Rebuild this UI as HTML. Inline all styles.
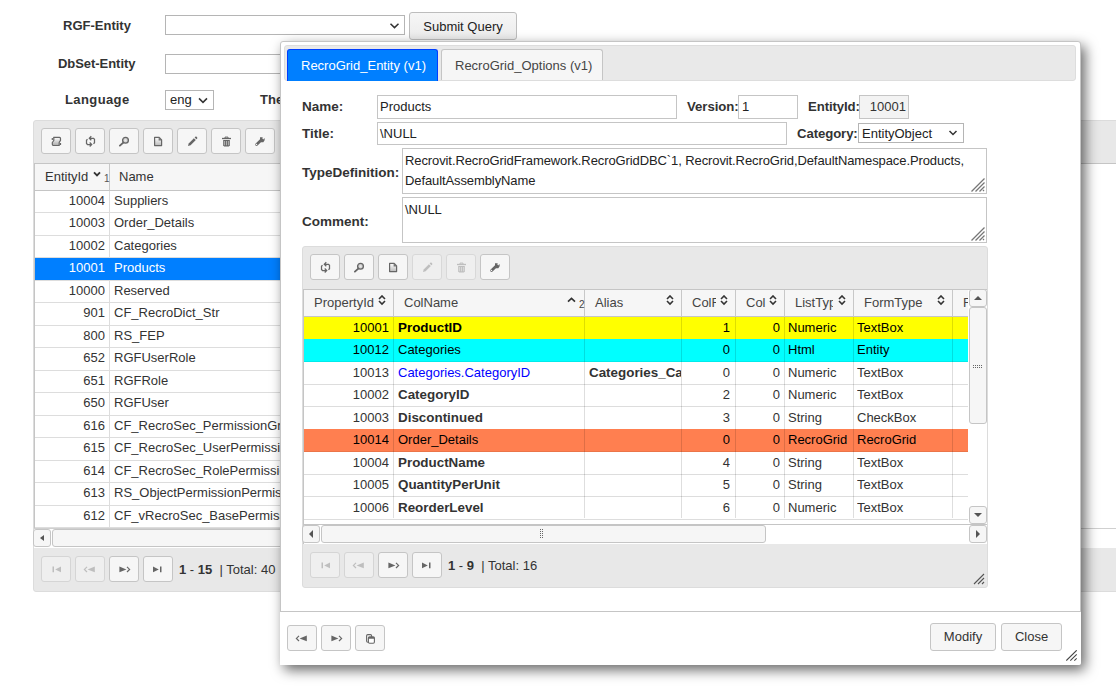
<!DOCTYPE html><html><head><meta charset="utf-8"><style>
*{box-sizing:border-box}
html,body{margin:0;padding:0;background:#fff;width:1116px;height:690px;overflow:hidden;position:relative;font-family:"Liberation Sans",sans-serif;color:#333;font-size:13px}
.a{position:absolute}
.lbl{position:absolute;font-weight:bold;color:#333;font-size:13px;white-space:nowrap;line-height:15px}
.sel{position:absolute;border:1px solid #b5b5b5;background:#fff}
.btn{position:absolute;background:#f6f6f6;border:1px solid #c5c5c5;border-radius:3px}
.btn .ic{position:absolute;left:50%;top:50%;margin-left:-8px;margin-top:-8px}
.btn .bl{position:absolute;left:0;right:0;top:0;bottom:inherit;height:100%;display:flex;align-items:center;justify-content:center;color:#333;font-size:13px}
.dis .ic{opacity:.35}
.txt{position:absolute;white-space:nowrap;line-height:15px}
.cell{position:absolute;white-space:nowrap;overflow:hidden;line-height:15px;color:#333}
.inp{position:absolute;border:1px solid #c5c5c5;background:#fff;font-size:13px;white-space:nowrap;overflow:hidden;color:#222}
.hl{position:absolute;height:1px;background:#ddd}
.vl{position:absolute;width:1px;background:#ddd}
</style></head><body>
<div class="lbl" style="left:63px;top:18px">RGF-Entity</div>
<div class="sel" style="left:165px;top:15px;width:240px;height:20px"></div>
<svg class="a" style="left:389px;top:22px" width="12" height="8"><path d="M1.5 1.8 5.5 5.6 9.5 1.8" stroke="#333" stroke-width="1.5" fill="none"/></svg>
<div class="btn" style="left:409px;top:12px;width:108px;height:28px;background:linear-gradient(#f6f6f6,#ececec);border-color:#bdbdbd"><div class="bl" style="color:#222;padding-top:1px">Submit Query</div></div>
<div class="lbl" style="left:58px;top:56px;letter-spacing:-.05px">DbSet-Entity</div>
<div class="sel" style="left:165px;top:54px;width:240px;height:20px"></div>
<div class="lbl" style="left:65px;top:92px;letter-spacing:.4px">Language</div>
<div class="sel" style="left:165px;top:90px;width:49px;height:20px"></div>
<div class="txt" style="left:170px;top:92px;color:#222">eng</div>
<svg class="a" style="left:198px;top:97px" width="10" height="8"><path d="M1 1.4 5 5.4 9 1.4" stroke="#333" stroke-width="1.5" fill="none"/></svg>
<div class="lbl" style="left:260px;top:92px">Theme</div>
<div class="a" style="left:33px;top:120px;width:1200px;height:472px;background:#e8e8e8;border:1px solid #dcdcdc;border-radius:3px"></div>
<div class="btn" style="left:41px;top:128px;width:30px;height:26px;"><svg class="ic" width="16" height="16" viewBox="0 0 16 16"><defs><linearGradient id="gs" x1="0" y1="0" x2="0" y2="1"><stop offset="0" stop-color="#fff"/><stop offset="1" stop-color="#aaa"/></linearGradient></defs><path d="M5.6 4.3H11.5Q12.5 4.5 12.5 5.5V7.4L11.2 9.3V12.5H5.3Q4.3 12.3 4.3 11.3V9.5L5.8 7.5V5.3Q5.8 4.3 5.6 4.3Z" fill="url(#gs)" stroke="#666" stroke-width="1.2" stroke-linejoin="round"/><path d="M4.3 5v2M12.5 10v2" stroke="#666" stroke-width="1.2"/></svg></div>
<div class="btn" style="left:75px;top:128px;width:30px;height:26px;"><svg class="ic" width="16" height="16" viewBox="0 0 16 16"><path d="M9.3 3.3 7.3 5.3 9.3 7.3M7.3 5.3H11.5L12.5 6.3V9.7L11.5 10.7M5.5 6.3 4.5 7.3V10.5L5.5 11.5H9.7M7.7 9.5 9.7 11.5 7.7 13.5" stroke="#666" stroke-width="1.25" fill="none"/></svg></div>
<div class="btn" style="left:109px;top:128px;width:30px;height:26px;"><svg class="ic" width="16" height="16" viewBox="0 0 16 16"><defs><radialGradient id="gq"><stop offset="0" stop-color="#eee"/><stop offset="1" stop-color="#bbb"/></radialGradient></defs><circle cx="9.5" cy="7.3" r="2.9" fill="url(#gq)" stroke="#666" stroke-width="1.3"/><path d="M7.3 9.6 3.9 12.6" stroke="#666" stroke-width="1.9" stroke-linecap="round"/></svg></div>
<div class="btn" style="left:143px;top:128px;width:30px;height:26px;"><svg class="ic" width="16" height="16" viewBox="0 0 16 16"><defs><linearGradient id="gd" x1="0" y1="0" x2="0" y2="1"><stop offset="0" stop-color="#fff"/><stop offset="1" stop-color="#bbb"/></linearGradient></defs><path d="M4.6 4.3H9.2L11.6 6.8V12.6H4.6Z" fill="url(#gd)" stroke="#666" stroke-width="1.2" stroke-linejoin="round"/><path d="M8.6 4.3V7.4H11.6V6.4L9.5 4.3Z" fill="#777"/></svg></div>
<div class="btn" style="left:177px;top:128px;width:30px;height:26px;"><svg class="ic" width="16" height="16" viewBox="0 0 16 16"><path d="M4 13 4.7 10.4 9.9 5.2 11.8 7.1 6.6 12.3Z" fill="#666"/><path d="M10.6 4.5 11.6 3.6Q12.1 3.3 12.6 3.8L13.2 4.4Q13.6 4.9 13.2 5.4L12.4 6.3Z" fill="#666"/></svg></div>
<div class="btn" style="left:211px;top:128px;width:30px;height:26px;"><svg class="ic" width="16" height="16" viewBox="0 0 16 16"><path d="M4 5.5H13" stroke="#666" stroke-width="1.3"/><path d="M7 5V4.1H10V5" stroke="#666" stroke-width="1" fill="none"/><path d="M5.2 7H11.8V12.5L10.8 13.6H6.2L5.2 12.5Z" fill="#666"/><path d="M6.6 8V12.3M8.5 8V12.3M10.4 8V12.3" stroke="#bbb" stroke-width=".9"/></svg></div>
<div class="btn" style="left:245px;top:128px;width:30px;height:26px;"><svg class="ic" width="16" height="16" viewBox="0 0 16 16"><path d="M4.6 11.5 9.5 6.8" stroke="#666" stroke-width="2.8" stroke-linecap="round"/><path d="M8 4.2H10.8L10.2 5.6L11.2 6.4L12.5 5Q12.9 6 12.5 7.5L11.3 9.2H9L8 7.8Z" fill="#666"/><circle cx="4.5" cy="11.6" r=".75" fill="#f6f6f6"/></svg></div>
<div class="a" style="left:34px;top:163px;width:1200px;height:365px;background:#fff;border-top:1px solid #c5c5c5"></div>
<div class="a" style="left:34px;top:164px;width:1000px;height:27px;background:#f6f6f6;border-bottom:1px solid #c5c5c5;border-left:1px solid #c5c5c5"></div>
<div class="vl" style="left:109px;top:164px;height:364px;background:#ddd"></div>
<div class="vl" style="left:109px;top:164px;height:27px;background:#c8c8c8"></div>
<div class="txt" style="left:45px;top:169px;color:#333">EntityId</div>
<svg class="a" style="left:93px;top:171px" width="8" height="6"><path d="M1 1.3 4 4.3 7 1.3" stroke="#333" stroke-width="1.9" fill="none"/></svg>
<div class="txt" style="left:104px;top:174px;font-size:10px;line-height:10px;color:#555">1</div>
<div class="txt" style="left:119px;top:169px">Name</div>
<div class="hl" style="left:35px;top:212.4px;width:1000px"></div>
<div class="cell" style="left:35px;top:192.9px;width:70px;text-align:right;color:#333">10004</div>
<div class="cell" style="left:114px;top:192.9px;width:180px;color:#333">Suppliers</div>
<div class="hl" style="left:35px;top:234.9px;width:1000px"></div>
<div class="cell" style="left:35px;top:215.4px;width:70px;text-align:right;color:#333">10003</div>
<div class="cell" style="left:114px;top:215.4px;width:180px;color:#333">Order_Details</div>
<div class="hl" style="left:35px;top:257.4px;width:1000px"></div>
<div class="cell" style="left:35px;top:237.9px;width:70px;text-align:right;color:#333">10002</div>
<div class="cell" style="left:114px;top:237.9px;width:180px;color:#333">Categories</div>
<div class="a" style="left:34px;top:257.9px;width:1000px;height:22.5px;background:#007fff"></div>
<div class="hl" style="left:35px;top:279.9px;width:1000px"></div>
<div class="cell" style="left:35px;top:260.4px;width:70px;text-align:right;color:#fff">10001</div>
<div class="cell" style="left:114px;top:260.4px;width:180px;color:#fff">Products</div>
<div class="hl" style="left:35px;top:302.4px;width:1000px"></div>
<div class="cell" style="left:35px;top:282.9px;width:70px;text-align:right;color:#333">10000</div>
<div class="cell" style="left:114px;top:282.9px;width:180px;color:#333">Reserved</div>
<div class="hl" style="left:35px;top:324.9px;width:1000px"></div>
<div class="cell" style="left:35px;top:305.4px;width:70px;text-align:right;color:#333">901</div>
<div class="cell" style="left:114px;top:305.4px;width:180px;color:#333">CF_RecroDict_Str</div>
<div class="hl" style="left:35px;top:347.4px;width:1000px"></div>
<div class="cell" style="left:35px;top:327.9px;width:70px;text-align:right;color:#333">800</div>
<div class="cell" style="left:114px;top:327.9px;width:180px;color:#333">RS_FEP</div>
<div class="hl" style="left:35px;top:369.9px;width:1000px"></div>
<div class="cell" style="left:35px;top:350.4px;width:70px;text-align:right;color:#333">652</div>
<div class="cell" style="left:114px;top:350.4px;width:180px;color:#333">RGFUserRole</div>
<div class="hl" style="left:35px;top:392.4px;width:1000px"></div>
<div class="cell" style="left:35px;top:372.9px;width:70px;text-align:right;color:#333">651</div>
<div class="cell" style="left:114px;top:372.9px;width:180px;color:#333">RGFRole</div>
<div class="hl" style="left:35px;top:414.9px;width:1000px"></div>
<div class="cell" style="left:35px;top:395.4px;width:70px;text-align:right;color:#333">650</div>
<div class="cell" style="left:114px;top:395.4px;width:180px;color:#333">RGFUser</div>
<div class="hl" style="left:35px;top:437.4px;width:1000px"></div>
<div class="cell" style="left:35px;top:417.9px;width:70px;text-align:right;color:#333">616</div>
<div class="cell" style="left:114px;top:417.9px;width:180px;color:#333">CF_RecroSec_PermissionGroup</div>
<div class="hl" style="left:35px;top:459.9px;width:1000px"></div>
<div class="cell" style="left:35px;top:440.4px;width:70px;text-align:right;color:#333">615</div>
<div class="cell" style="left:114px;top:440.4px;width:180px;color:#333">CF_RecroSec_UserPermission</div>
<div class="hl" style="left:35px;top:482.4px;width:1000px"></div>
<div class="cell" style="left:35px;top:462.9px;width:70px;text-align:right;color:#333">614</div>
<div class="cell" style="left:114px;top:462.9px;width:180px;color:#333">CF_RecroSec_RolePermission</div>
<div class="hl" style="left:35px;top:504.9px;width:1000px"></div>
<div class="cell" style="left:35px;top:485.4px;width:70px;text-align:right;color:#333">613</div>
<div class="cell" style="left:114px;top:485.4px;width:180px;color:#333">RS_ObjectPermissionPermission</div>
<div class="hl" style="left:35px;top:527.4px;width:1000px"></div>
<div class="cell" style="left:35px;top:507.9px;width:70px;text-align:right;color:#333">612</div>
<div class="cell" style="left:114px;top:507.9px;width:180px;color:#333">CF_vRecroSec_BasePermission</div>
<div class="vl" style="left:34px;top:164px;height:364px;background:#c5c5c5"></div>
<div class="a" style="left:34px;top:528px;width:1200px;height:20px;background:#fff;border-top:1px solid #d0d0d0"></div>
<div class="btn" style="left:33px;top:529px;width:18px;height:18px;border-radius:3px"></div>
<svg class="a" style="left:38px;top:534px" width="8" height="8"><path d="M6 1 2 4 6 7z" fill="#555"/></svg>
<div class="btn" style="left:52px;top:529px;width:900px;height:18px;border-radius:3px"></div>
<div class="btn dis" style="left:41px;top:556px;width:30px;height:26px;background:#efefef;border-color:#d5d5d5"><svg class="ic" width="16" height="16" viewBox="0 0 16 16"><path d="M4.5 5.6h1.5v5.6h-1.5zM7.2 8.4 13 5.6V11.2Z" fill="#666"/></svg></div>
<div class="btn dis" style="left:75px;top:556px;width:30px;height:26px;background:#efefef;border-color:#d5d5d5"><svg class="ic" width="16" height="16" viewBox="0 0 16 16"><path d="M5 5.8 2.4 8.4 5 11" stroke="#666" stroke-width="1.2" fill="none"/><path d="M5.6 8.4 12.8 5.6V11.2Z" fill="#666"/></svg></div>
<div class="btn" style="left:109px;top:556px;width:30px;height:26px;"><svg class="ic" width="16" height="16" viewBox="0 0 16 16"><path d="M3.4 5.6 10.4 8.4 3.4 11.2Z" fill="#666"/><path d="M11 5.8 13.6 8.4 11 11" stroke="#666" stroke-width="1.2" fill="none"/></svg></div>
<div class="btn" style="left:143px;top:556px;width:30px;height:26px;"><svg class="ic" width="16" height="16" viewBox="0 0 16 16"><path d="M10 5.6h1.5v5.6h-1.5zM3 5.6 8.8 8.4 3 11.2Z" fill="#666"/></svg></div>
<div class="txt" style="left:179px;top:562px"><b>1</b> - <b>15</b>&nbsp; | Total: 40</div>
<div class="a" style="left:280px;top:41px;width:801px;height:624px;background:#fff;border:1px solid #c5c5c5;border-radius:3px;box-shadow:4px 5px 13px rgba(0,0,0,.6)"></div>
<div class="a" style="left:284px;top:45px;width:792px;height:36px;background:#e9e9e9;border:1px solid #dddddd;border-radius:3px"></div>
<div class="a" style="left:287px;top:49px;width:151px;height:32px;background:#007fff;border:1px solid #003eff;border-bottom:none;border-radius:3px 3px 0 0"></div>
<div class="txt" style="left:301px;top:58px;color:#fff">RecroGrid_Entity (v1)</div>
<div class="a" style="left:441px;top:49px;width:162px;height:31px;background:#f6f6f6;border:1px solid #c5c5c5;border-bottom:none;border-radius:3px 3px 0 0"></div>
<div class="txt" style="left:455px;top:58px;color:#454545">RecroGrid_Options (v1)</div>
<div class="lbl" style="left:302px;top:99px;font-size:13.5px">Name:</div>
<div class="inp" style="left:377px;top:95px;width:300px;height:24px;padding:3px 0 0 2px">Products</div>
<div class="lbl" style="left:687px;top:99px;font-size:13.2px;letter-spacing:-.05px">Version:</div>
<div class="inp" style="left:738px;top:95px;width:60px;height:24px;padding:3px 0 0 3px">1</div>
<div class="lbl" style="left:808px;top:99px;font-size:13.2px;letter-spacing:-.1px">EntityId:</div>
<div class="inp" style="left:859px;top:95px;width:50px;height:24px;padding:3px 2px 0 0;background:#f3f3f3;text-align:right;color:#333">10001</div>
<div class="lbl" style="left:302px;top:126px;font-size:13.5px">Title:</div>
<div class="inp" style="left:377px;top:122px;width:410px;height:23px;padding:3px 0 0 2px">\NULL</div>
<div class="lbl" style="left:797px;top:126px;font-size:13.2px;letter-spacing:-.1px">Category:</div>
<div class="inp" style="left:858px;top:123px;width:106px;height:20px;padding:2px 0 0 3px;border-color:#b5b5b5">EntityObject</div>
<svg class="a" style="left:948px;top:129px" width="10" height="8"><path d="M1.5 2 5 5.5 8.5 2" stroke="#333" stroke-width="1.5" fill="none"/></svg>
<div class="lbl" style="left:302px;top:165px;font-size:13.5px">TypeDefinition:</div>
<div class="inp" style="left:402px;top:148px;width:585px;height:46px;padding:2px 0 0 2px;line-height:19.5px;white-space:normal;letter-spacing:-0.1px">Recrovit.RecroGridFramework.RecroGridDBC`1, Recrovit.RecroGrid,DefaultNamespace.Products,<br>DefaultAssemblyName</div>
<svg class="a" style="left:971px;top:178px" width="14" height="14"><path d="M.5 13.5 13.5 .5M4.5 13.5 13.5 4.5M8.5 13.5 13.5 8.5M12 13 13 12" stroke="#777" stroke-width="1.3"/></svg>
<div class="lbl" style="left:302px;top:214px;font-size:13.5px">Comment:</div>
<div class="inp" style="left:402px;top:197px;width:585px;height:46px;padding:2px 0 0 2px;line-height:19.5px">\NULL</div>
<svg class="a" style="left:971px;top:227px" width="14" height="14"><path d="M.5 13.5 13.5 .5M4.5 13.5 13.5 4.5M8.5 13.5 13.5 8.5M12 13 13 12" stroke="#777" stroke-width="1.3"/></svg>
<div class="a" style="left:302px;top:246px;width:686px;height:342px;background:#e8e8e8;border:1px solid #dcdcdc;border-radius:3px"></div>
<div class="btn" style="left:310px;top:254px;width:30px;height:26px;"><svg class="ic" width="16" height="16" viewBox="0 0 16 16"><path d="M9.3 3.3 7.3 5.3 9.3 7.3M7.3 5.3H11.5L12.5 6.3V9.7L11.5 10.7M5.5 6.3 4.5 7.3V10.5L5.5 11.5H9.7M7.7 9.5 9.7 11.5 7.7 13.5" stroke="#666" stroke-width="1.25" fill="none"/></svg></div>
<div class="btn" style="left:344px;top:254px;width:30px;height:26px;"><svg class="ic" width="16" height="16" viewBox="0 0 16 16"><defs><radialGradient id="gq"><stop offset="0" stop-color="#eee"/><stop offset="1" stop-color="#bbb"/></radialGradient></defs><circle cx="9.5" cy="7.3" r="2.9" fill="url(#gq)" stroke="#666" stroke-width="1.3"/><path d="M7.3 9.6 3.9 12.6" stroke="#666" stroke-width="1.9" stroke-linecap="round"/></svg></div>
<div class="btn" style="left:378px;top:254px;width:30px;height:26px;"><svg class="ic" width="16" height="16" viewBox="0 0 16 16"><defs><linearGradient id="gd" x1="0" y1="0" x2="0" y2="1"><stop offset="0" stop-color="#fff"/><stop offset="1" stop-color="#bbb"/></linearGradient></defs><path d="M4.6 4.3H9.2L11.6 6.8V12.6H4.6Z" fill="url(#gd)" stroke="#666" stroke-width="1.2" stroke-linejoin="round"/><path d="M8.6 4.3V7.4H11.6V6.4L9.5 4.3Z" fill="#777"/></svg></div>
<div class="btn dis" style="left:412px;top:254px;width:30px;height:26px;background:#efefef;border-color:#d8d8d8"><svg class="ic" width="16" height="16" viewBox="0 0 16 16"><path d="M4 13 4.7 10.4 9.9 5.2 11.8 7.1 6.6 12.3Z" fill="#666"/><path d="M10.6 4.5 11.6 3.6Q12.1 3.3 12.6 3.8L13.2 4.4Q13.6 4.9 13.2 5.4L12.4 6.3Z" fill="#666"/></svg></div>
<div class="btn dis" style="left:446px;top:254px;width:30px;height:26px;background:#efefef;border-color:#d8d8d8"><svg class="ic" width="16" height="16" viewBox="0 0 16 16"><path d="M4 5.5H13" stroke="#666" stroke-width="1.3"/><path d="M7 5V4.1H10V5" stroke="#666" stroke-width="1" fill="none"/><path d="M5.2 7H11.8V12.5L10.8 13.6H6.2L5.2 12.5Z" fill="#666"/><path d="M6.6 8V12.3M8.5 8V12.3M10.4 8V12.3" stroke="#bbb" stroke-width=".9"/></svg></div>
<div class="btn" style="left:480px;top:254px;width:30px;height:26px;"><svg class="ic" width="16" height="16" viewBox="0 0 16 16"><path d="M4.6 11.5 9.5 6.8" stroke="#666" stroke-width="2.8" stroke-linecap="round"/><path d="M8 4.2H10.8L10.2 5.6L11.2 6.4L12.5 5Q12.9 6 12.5 7.5L11.3 9.2H9L8 7.8Z" fill="#666"/><circle cx="4.5" cy="11.6" r=".75" fill="#f6f6f6"/></svg></div>
<div class="a" style="left:303px;top:289px;width:684px;height:235px;background:#fff;border-top:1px solid #c5c5c5;border-left:1px solid #c5c5c5"></div>
<div class="a" style="left:304px;top:290px;width:664px;height:27px;background:#f6f6f6;border-bottom:1px solid #c5c5c5"></div>
<div class="vl" style="left:393px;top:290px;height:27px;background:#c8c8c8"></div>
<div class="vl" style="left:584px;top:290px;height:27px;background:#c8c8c8"></div>
<div class="vl" style="left:681px;top:290px;height:27px;background:#c8c8c8"></div>
<div class="vl" style="left:735px;top:290px;height:27px;background:#c8c8c8"></div>
<div class="vl" style="left:784px;top:290px;height:27px;background:#c8c8c8"></div>
<div class="vl" style="left:853px;top:290px;height:27px;background:#c8c8c8"></div>
<div class="vl" style="left:952px;top:290px;height:27px;background:#c8c8c8"></div>
<div class="txt" style="left:314px;top:295px;color:#444">PropertyId</div>
<svg class="a" style="left:378px;top:295px" width="8" height="11"><path d="M1 4 4 1 7 4M1 6 4 9 7 6" stroke="#333" stroke-width="1.6" fill="none"/></svg>
<div class="txt" style="left:404px;top:295px;color:#444">ColName</div>
<div class="txt" style="left:595px;top:295px;color:#444">Alias</div>
<svg class="a" style="left:666px;top:295px" width="8" height="11"><path d="M1 4 4 1 7 4M1 6 4 9 7 6" stroke="#333" stroke-width="1.6" fill="none"/></svg>
<div class="txt" style="left:692px;top:295px;color:#444;width:24px;overflow:hidden">ColF</div>
<svg class="a" style="left:720px;top:295px" width="8" height="11"><path d="M1 4 4 1 7 4M1 6 4 9 7 6" stroke="#333" stroke-width="1.6" fill="none"/></svg>
<div class="txt" style="left:746px;top:295px;color:#444">Col</div>
<svg class="a" style="left:769px;top:295px" width="8" height="11"><path d="M1 4 4 1 7 4M1 6 4 9 7 6" stroke="#333" stroke-width="1.6" fill="none"/></svg>
<div class="txt" style="left:795px;top:295px;color:#444;width:38px;overflow:hidden">ListTyp</div>
<svg class="a" style="left:838px;top:295px" width="8" height="11"><path d="M1 4 4 1 7 4M1 6 4 9 7 6" stroke="#333" stroke-width="1.6" fill="none"/></svg>
<div class="txt" style="left:864px;top:295px;color:#444">FormType</div>
<svg class="a" style="left:937px;top:295px" width="8" height="11"><path d="M1 4 4 1 7 4M1 6 4 9 7 6" stroke="#333" stroke-width="1.6" fill="none"/></svg>
<div class="txt" style="left:963px;top:295px;color:#444;width:5px;overflow:hidden">F</div>
<svg class="a" style="left:567px;top:297px" width="9" height="6"><path d="M1 4.6 4.5 1.4 8 4.6" stroke="#333" stroke-width="1.7" fill="none"/></svg>
<div class="txt" style="left:579px;top:300px;font-size:10px;line-height:10px;color:#444">2</div>
<div class="a" style="left:304px;top:316.5px;width:664px;height:22.5px;background:#ffff00"></div>
<div class="hl" style="left:304px;top:338.5px;width:664px;background:rgba(0,0,0,.08)"></div>
<div class="cell" style="left:304px;top:319.5px;width:85px;text-align:right;color:#000">10001</div>
<div class="cell" style="left:398px;top:319.5px;width:185px;font-weight:bold;font-size:13.4px;color:#000">ProductID</div>
<div class="cell" style="left:681px;top:319.5px;width:49px;text-align:right;color:#000">1</div>
<div class="cell" style="left:736px;top:319.5px;width:44px;text-align:right;color:#000">0</div>
<div class="cell" style="left:788px;top:319.5px;width:65px;color:#000">Numeric</div>
<div class="cell" style="left:857px;top:319.5px;width:95px;color:#000">TextBox</div>
<div class="a" style="left:304px;top:339.0px;width:664px;height:22.5px;background:#00ffff"></div>
<div class="hl" style="left:304px;top:361.0px;width:664px;background:rgba(0,0,0,.08)"></div>
<div class="cell" style="left:304px;top:342.0px;width:85px;text-align:right;color:#000">10012</div>
<div class="cell" style="left:398px;top:342.0px;width:185px;color:#000">Categories</div>
<div class="cell" style="left:681px;top:342.0px;width:49px;text-align:right;color:#000">0</div>
<div class="cell" style="left:736px;top:342.0px;width:44px;text-align:right;color:#000">0</div>
<div class="cell" style="left:788px;top:342.0px;width:65px;color:#000">Html</div>
<div class="cell" style="left:857px;top:342.0px;width:95px;color:#000">Entity</div>
<div class="hl" style="left:304px;top:383.5px;width:664px;background:#ddd"></div>
<div class="cell" style="left:304px;top:364.5px;width:85px;text-align:right;color:#333">10013</div>
<div class="cell" style="left:398px;top:364.5px;width:185px;color:#0000ff">Categories.CategoryID</div>
<div class="cell" style="left:589px;top:364.5px;width:92px;font-weight:bold;font-size:13.4px;color:#333">Categories_Ca</div>
<div class="cell" style="left:681px;top:364.5px;width:49px;text-align:right;color:#333">0</div>
<div class="cell" style="left:736px;top:364.5px;width:44px;text-align:right;color:#333">0</div>
<div class="cell" style="left:788px;top:364.5px;width:65px;color:#333">Numeric</div>
<div class="cell" style="left:857px;top:364.5px;width:95px;color:#333">TextBox</div>
<div class="hl" style="left:304px;top:406.0px;width:664px;background:#ddd"></div>
<div class="cell" style="left:304px;top:387.0px;width:85px;text-align:right;color:#333">10002</div>
<div class="cell" style="left:398px;top:387.0px;width:185px;font-weight:bold;font-size:13.4px;color:#333">CategoryID</div>
<div class="cell" style="left:681px;top:387.0px;width:49px;text-align:right;color:#333">2</div>
<div class="cell" style="left:736px;top:387.0px;width:44px;text-align:right;color:#333">0</div>
<div class="cell" style="left:788px;top:387.0px;width:65px;color:#333">Numeric</div>
<div class="cell" style="left:857px;top:387.0px;width:95px;color:#333">TextBox</div>
<div class="hl" style="left:304px;top:428.5px;width:664px;background:#ddd"></div>
<div class="cell" style="left:304px;top:409.5px;width:85px;text-align:right;color:#333">10003</div>
<div class="cell" style="left:398px;top:409.5px;width:185px;font-weight:bold;font-size:13.4px;color:#333">Discontinued</div>
<div class="cell" style="left:681px;top:409.5px;width:49px;text-align:right;color:#333">3</div>
<div class="cell" style="left:736px;top:409.5px;width:44px;text-align:right;color:#333">0</div>
<div class="cell" style="left:788px;top:409.5px;width:65px;color:#333">String</div>
<div class="cell" style="left:857px;top:409.5px;width:95px;color:#333">CheckBox</div>
<div class="a" style="left:304px;top:429.0px;width:664px;height:22.5px;background:#ff7f50"></div>
<div class="hl" style="left:304px;top:451.0px;width:664px;background:rgba(0,0,0,.08)"></div>
<div class="cell" style="left:304px;top:432.0px;width:85px;text-align:right;color:#000">10014</div>
<div class="cell" style="left:398px;top:432.0px;width:185px;color:#000">Order_Details</div>
<div class="cell" style="left:681px;top:432.0px;width:49px;text-align:right;color:#000">0</div>
<div class="cell" style="left:736px;top:432.0px;width:44px;text-align:right;color:#000">0</div>
<div class="cell" style="left:788px;top:432.0px;width:65px;color:#000">RecroGrid</div>
<div class="cell" style="left:857px;top:432.0px;width:95px;color:#000">RecroGrid</div>
<div class="hl" style="left:304px;top:473.5px;width:664px;background:#ddd"></div>
<div class="cell" style="left:304px;top:454.5px;width:85px;text-align:right;color:#333">10004</div>
<div class="cell" style="left:398px;top:454.5px;width:185px;font-weight:bold;font-size:13.4px;color:#333">ProductName</div>
<div class="cell" style="left:681px;top:454.5px;width:49px;text-align:right;color:#333">4</div>
<div class="cell" style="left:736px;top:454.5px;width:44px;text-align:right;color:#333">0</div>
<div class="cell" style="left:788px;top:454.5px;width:65px;color:#333">String</div>
<div class="cell" style="left:857px;top:454.5px;width:95px;color:#333">TextBox</div>
<div class="hl" style="left:304px;top:496.0px;width:664px;background:#ddd"></div>
<div class="cell" style="left:304px;top:477.0px;width:85px;text-align:right;color:#333">10005</div>
<div class="cell" style="left:398px;top:477.0px;width:185px;font-weight:bold;font-size:13.4px;color:#333">QuantityPerUnit</div>
<div class="cell" style="left:681px;top:477.0px;width:49px;text-align:right;color:#333">5</div>
<div class="cell" style="left:736px;top:477.0px;width:44px;text-align:right;color:#333">0</div>
<div class="cell" style="left:788px;top:477.0px;width:65px;color:#333">String</div>
<div class="cell" style="left:857px;top:477.0px;width:95px;color:#333">TextBox</div>
<div class="hl" style="left:304px;top:518.5px;width:664px;background:#ddd"></div>
<div class="cell" style="left:304px;top:499.5px;width:85px;text-align:right;color:#333">10006</div>
<div class="cell" style="left:398px;top:499.5px;width:185px;font-weight:bold;font-size:13.4px;color:#333">ReorderLevel</div>
<div class="cell" style="left:681px;top:499.5px;width:49px;text-align:right;color:#333">6</div>
<div class="cell" style="left:736px;top:499.5px;width:44px;text-align:right;color:#333">0</div>
<div class="cell" style="left:788px;top:499.5px;width:65px;color:#333">Numeric</div>
<div class="cell" style="left:857px;top:499.5px;width:95px;color:#333">TextBox</div>
<div class="vl" style="left:393px;top:317px;height:201px;background:rgba(0,0,0,.13)"></div>
<div class="vl" style="left:584px;top:317px;height:201px;background:rgba(0,0,0,.13)"></div>
<div class="vl" style="left:681px;top:317px;height:201px;background:rgba(0,0,0,.13)"></div>
<div class="vl" style="left:735px;top:317px;height:201px;background:rgba(0,0,0,.13)"></div>
<div class="vl" style="left:784px;top:317px;height:201px;background:rgba(0,0,0,.13)"></div>
<div class="vl" style="left:853px;top:317px;height:201px;background:rgba(0,0,0,.13)"></div>
<div class="vl" style="left:952px;top:317px;height:201px;background:rgba(0,0,0,.13)"></div>
<div class="btn" style="left:969px;top:289px;width:18px;height:18px"></div>
<svg class="a" style="left:974px;top:294px" width="8" height="8"><path d="M0 6 4 2 8 6z" fill="#555"/></svg>
<div class="btn" style="left:969px;top:307px;width:18px;height:117px"></div>
<svg class="a" style="left:973px;top:365px" width="10" height="3"><path d="M0 .5h10M0 2.5h10" stroke="#666" stroke-width="1" stroke-dasharray="1 1"/></svg>
<div class="btn" style="left:969px;top:506px;width:18px;height:18px"></div>
<svg class="a" style="left:974px;top:511px" width="8" height="8"><path d="M0 2 4 6 8 2z" fill="#555"/></svg>
<div class="a" style="left:303px;top:524px;width:684px;height:20px;background:#fff;border-top:1px solid #c5c5c5;border-left:1px solid #c5c5c5"></div>
<div class="btn" style="left:302px;top:525px;width:18px;height:18px"></div>
<svg class="a" style="left:307px;top:530px" width="8" height="8"><path d="M6 0 2 4 6 8z" fill="#555"/></svg>
<div class="btn" style="left:321px;top:525px;width:445px;height:18px"></div>
<svg class="a" style="left:540px;top:529px" width="4" height="10"><path d="M.5 0v10M2.5 0v10" stroke="#666" stroke-width="1" stroke-dasharray="1 1"/></svg>
<div class="btn" style="left:969px;top:525px;width:18px;height:18px"></div>
<svg class="a" style="left:974px;top:530px" width="8" height="8"><path d="M2 0 6 4 2 8z" fill="#555"/></svg>
<div class="btn dis" style="left:310px;top:552px;width:30px;height:26px;background:#efefef;border-color:#d5d5d5"><svg class="ic" width="16" height="16" viewBox="0 0 16 16"><path d="M4.5 5.6h1.5v5.6h-1.5zM7.2 8.4 13 5.6V11.2Z" fill="#666"/></svg></div>
<div class="btn dis" style="left:344px;top:552px;width:30px;height:26px;background:#efefef;border-color:#d5d5d5"><svg class="ic" width="16" height="16" viewBox="0 0 16 16"><path d="M5 5.8 2.4 8.4 5 11" stroke="#666" stroke-width="1.2" fill="none"/><path d="M5.6 8.4 12.8 5.6V11.2Z" fill="#666"/></svg></div>
<div class="btn" style="left:378px;top:552px;width:30px;height:26px;"><svg class="ic" width="16" height="16" viewBox="0 0 16 16"><path d="M3.4 5.6 10.4 8.4 3.4 11.2Z" fill="#666"/><path d="M11 5.8 13.6 8.4 11 11" stroke="#666" stroke-width="1.2" fill="none"/></svg></div>
<div class="btn" style="left:412px;top:552px;width:30px;height:26px;"><svg class="ic" width="16" height="16" viewBox="0 0 16 16"><path d="M10 5.6h1.5v5.6h-1.5zM3 5.6 8.8 8.4 3 11.2Z" fill="#666"/></svg></div>
<div class="txt" style="left:448px;top:558px"><b>1</b> - <b>9</b>&nbsp; | Total: 16</div>
<svg class="a" style="left:973px;top:573px" width="12" height="12"><path d="M1 11 11 1M5 11 11 5M9 11 11 9" stroke="#555" stroke-width="1.1"/></svg>
<div class="a" style="left:280px;top:612px;width:801px;height:53px;background:#fff;border-radius:0 0 2px 0"></div>
<div class="hl" style="left:280px;top:611px;width:800px;background:#c5c5c5"></div>
<div class="btn" style="left:287px;top:625px;width:30px;height:26px;"><svg class="ic" width="16" height="16" viewBox="0 0 16 16"><path d="M5 5.8 2.4 8.4 5 11" stroke="#666" stroke-width="1.2" fill="none"/><path d="M5.6 8.4 12.8 5.6V11.2Z" fill="#666"/></svg></div>
<div class="btn" style="left:321px;top:625px;width:30px;height:26px;"><svg class="ic" width="16" height="16" viewBox="0 0 16 16"><path d="M3.4 5.6 10.4 8.4 3.4 11.2Z" fill="#666"/><path d="M11 5.8 13.6 8.4 11 11" stroke="#666" stroke-width="1.2" fill="none"/></svg></div>
<div class="btn" style="left:355px;top:625px;width:30px;height:26px;"><svg class="ic" width="16" height="16" viewBox="0 0 16 16"><rect x="4.6" y="4.6" width="5" height="7.6" rx="1.2" fill="#f6f6f6" stroke="#666" stroke-width="1.1"/><rect x="6.4" y="6.9" width="6" height="6.4" rx="1.2" fill="#fff" stroke="#666" stroke-width="1.1"/><path d="M6.4 7.5Q6.4 6.9 7.4 6.9H11.4Q12.4 6.9 12.4 7.9V8.8H6.4Z" fill="#666"/></svg></div>
<div class="btn" style="left:930px;top:623px;width:66px;height:28px;"><div class="bl"><span style="position:relative;top:-1px">Modify</span></div></div>
<div class="btn" style="left:1001px;top:623px;width:61px;height:28px;"><div class="bl"><span style="position:relative;top:-1px">Close</span></div></div>
<svg class="a" style="left:1066px;top:650px" width="12" height="12"><path d="M.3 10.6 10.7 .3M4.3 10.6 10.7 4.3M8.3 10.6 10.7 8.3" stroke="#444" stroke-width="1.1"/></svg>
</body></html>
